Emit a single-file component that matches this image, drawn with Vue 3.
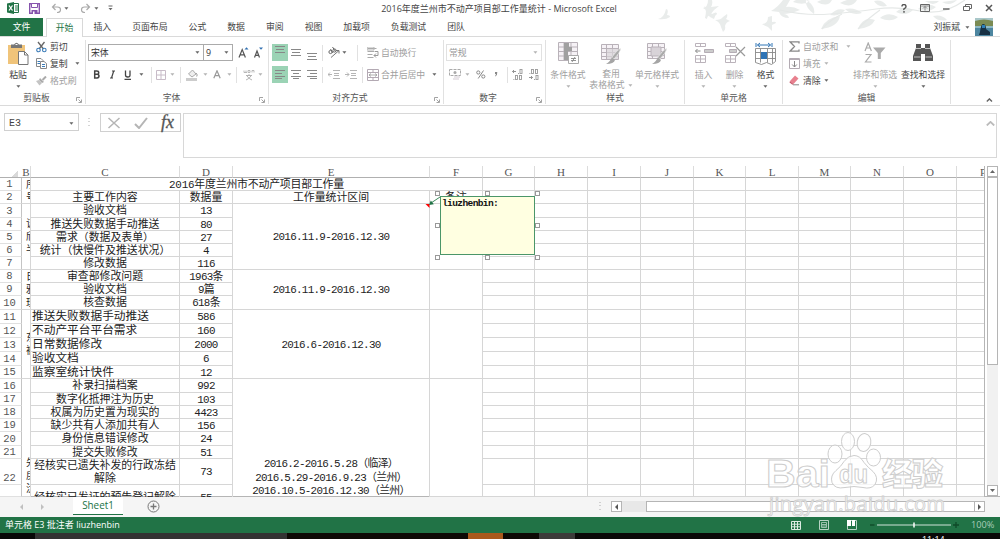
<template>
  <div class="excel">
    <!-- 標題列 + 頁籤 -->
    <header class="top">
      <svg class="leaves" width="350" height="36" viewBox="650 0 350 36">
        <g fill="#e9eceb">
          <path d="M658 19q6-1 8-10q3 0 1 6q3 0 3 2q-4 3-12 2zM703 8q5-1 5-8h4q1 4-1 7l8-1q-6 4-9 9q-3 1-3 4l-2-1q1-5 1-8zM704 6l8 8q5-3 5 0q-2 1-3 5q-5-2-7-5zM715 20q6 0 8-3l4-3q1 2-1 5l4 2q-4 1-5 5q1 4-2 6l-2-5q-1-5-6-7zM762 24q6 0 6-7l4-1v6q4-1 4 1l-4 2v6l-4-4q-3-1-6-3z" />
          <path d="M771 11q7-4 12-11h7l-4 7q7-1 14 3q-10 4-17 4q5 0 6 4q-8 0-10-6zM793 2q5-5 17-1q-6 5-17 1zM817 2q7-4 15-2q-4 8-15 2zM806 0q-1 8 8 14q2-8-8-14zM840 3q8-5 17-3q-5 9-17 3zM845 9q10-2 17 4q-10 3-17-4zM821 29q4-11 19-13q-2 11-19 13zM830 15q7-8 15-5q-5 7-15 5zM858 29q5-13 17-9q-4 8-17 9zM880 18q8-7 18-1q-7 6-18 1zM874 1q8-2 13 5q-9 2-13-5zM896 12q8-7 17-2q-7 7-17 2zM918 9q9-8 18-2q-8 7-18 2zM925 1q9 6 14 0zM942 2q8 5 15-2zM933 16q9-2 14 4q-9 2-14-4z" />
        </g>
        <path d="M780 10q25 6 50 4t46-5t44 2t45-11M842 14q-12 6-20 15M880 10q-14 10-22 19" fill="none" stroke="#e5e8e7" stroke-width="1.2" />
      </svg>
      <div class="title-row">
        <div class="quick"><Slots :items="quick" /></div>
        <div class="title">2016年度兰州市不动产项目部工作量统计 - Microsoft Excel</div>
        <div class="win"><Slots :items="winButtons" /></div>
      </div>
      <nav class="tabs">
        <span class="file">文件</span>
        <span
          v-for="tab in tabs"
          :key="tab"
          class="tab"
          :class="{ active: tab === activeTab }"
          @click="activeTab = tab">{{ tab }}</span>
        <span class="user">刘振斌</span>
        <Icon name="caret" />
        <Icon class="avatar" name="avatar" />
      </nav>
    </header>

    <!-- 功能區 -->
    <section class="ribbon">
      <div class="group g-clip">
        <div class="body">
          <div class="big paste"><Icon name="paste" /><span>粘贴</span><Icon name="caret" /></div>
          <div class="stack">
            <div class="line"><Icon name="cut" /><span>剪切</span></div>
            <div class="line"><Icon name="copy" /><span>复制</span><Icon class="far" name="caret" /></div>
            <div class="line off"><Icon name="brush" /><span>格式刷</span></div>
          </div>
        </div>
        <div class="label">剪贴板<Icon class="launch" name="launch" /></div>
      </div>

      <div class="group g-font">
        <div class="body rows">
          <div class="row">
            <div class="combo font-name">宋体<Icon name="caret" /></div>
            <div class="combo font-size">9<Icon name="caret" /></div>
            <Slots :items="fontSizeButtons" />
          </div>
          <div class="row"><Slots :items="fontButtons" /></div>
        </div>
        <div class="label">字体<Icon class="launch" name="launch" /></div>
      </div>

      <div class="group g-align">
        <div class="body rows">
          <div class="row off"><Slots :items="alignTop" /><span>自动换行</span></div>
          <div class="row off"><Slots :items="alignBottom" /><span>合并后居中</span><Icon class="far" name="caret" /></div>
        </div>
        <div class="label">对齐方式<Icon class="launch" name="launch" /></div>
      </div>

      <div class="group g-num">
        <div class="body rows">
          <div class="row"><div class="combo num-format">常规<Icon name="caretOff" /></div></div>
          <div class="row"><Slots :items="numberButtons" /></div>
        </div>
        <div class="label">数字<Icon class="launch" name="launch" /></div>
      </div>

      <div class="group g-style off">
        <div class="body">
          <div class="big"><Icon name="condFormat" /><span>条件格式</span><Icon name="caretOff" /></div>
          <div class="big"><Icon name="tableFormat" /><span>套用</span><span class="second">表格格式<Icon name="caretOff" /></span></div>
          <div class="big"><Icon name="cellStyle" /><span>单元格样式</span><Icon name="caretOff" /></div>
        </div>
        <div class="label">样式</div>
      </div>

      <div class="group g-cell">
        <div class="body">
          <div class="big off"><Icon name="insert" /><span>插入</span><Icon name="caretOff" /></div>
          <div class="big off"><Icon name="remove" /><span>删除</span><Icon name="caretOff" /></div>
          <div class="big"><Icon name="format" /><span>格式</span><Icon name="caret" /></div>
        </div>
        <div class="label">单元格</div>
      </div>

      <div class="group g-edit">
        <div class="body">
          <div class="stack">
            <div class="line off"><Icon name="sum" /><span>自动求和</span><Icon class="far" name="caretOff" /></div>
            <div class="line off"><Icon name="fillDown" /><span>填充</span><Icon class="near" name="caretOff" /></div>
            <div class="line"><Icon name="eraser" /><span>清除</span><Icon class="near" name="caret" /></div>
          </div>
          <div class="big off"><Icon name="sort" /><span>排序和筛选</span><Icon name="caretOff" /></div>
          <div class="big"><Icon name="find" /><span>查找和选择</span><Icon name="caret" /></div>
        </div>
        <div class="label">编辑</div>
      </div>
      <Icon class="collapse" name="up" />
    </section>

    <!-- 編輯列 -->
    <section class="formula">
      <div class="name-box">E3<Icon name="caret" /></div>
      <Icon class="grip" name="grip" />
      <div class="fx"><Icon name="cancel" /><Icon name="enter" /><i>fx</i></div>
      <div class="input"><Icon name="upOff" /></div>
    </section>

    <!-- 工作表 -->
    <section class="sheet-area">
      <div class="sheet" :style="{ gridTemplateColumns: colTemplate, gridTemplateRows: rowTemplate }">
        <div class="corner"></div>
        <div v-for="c in colNames" :key="c" class="col-head">{{ c }}</div>
        <div
          v-for="(h, i) in rowHeights"
          :key="'r' + i"
          class="row-head"
          :style="{ gridRow: i + 2 }">{{ i < 22 ? i + 1 : '' }}</div>
        <div
          v-for="cell in cells"
          :key="cell.r + '-' + cell.c"
          class="cell"
          :class="cell.cls"
          :style="{ gridRow: `${cell.r + 1} / span ${cell.rs || 1}`, gridColumn: `${cell.c} / span ${cell.cs || 1}` }">{{ cell.t }}</div>
      </div>
      <div class="vscroll">
        <div class="sbtn"><Icon name="arrUp" /></div>
        <div class="vthumb"></div>
        <div class="vrest"></div>
        <div class="sbtn"><Icon name="arrDown" /></div>
      </div>
      <!-- 批註 -->
      <svg class="pointer" width="20" height="12" viewBox="424 196 20 12">
        <path d="M425.5 204h4v4z" fill="#f00" />
        <path d="M440 197l-9 6" stroke="#3c8b5c" />
        <path d="M429 205l1.800-4.500 3 3.800z" fill="#217346" />
      </svg>
      <div class="note"><b>liuzhenbin:</b></div>
      <svg class="handles" width="106" height="70">
        <rect v-for="(p, i) in handles" :key="i" :x="p[0]" :y="p[1]" width="4" height="4" fill="#fff" stroke="#999" />
      </svg>
    </section>

    <section class="sheet-tabs">
      <Icon class="prev" name="arrLeftOff" />
      <Icon class="next" name="arrRightOff" />
      <div class="sheet-tab">Sheet1</div>
      <Icon class="add" name="add" />
      <Icon class="hgrip" name="grip" />
      <div class="sbtn"><Icon name="arrLeft" /></div>
      <div class="hrest"></div>
      <div class="hthumb"></div>
      <div class="sbtn"><Icon name="arrRight" /></div>
    </section>

    <footer class="status">
      <span class="info">单元格 E3 批注者 liuzhenbin</span>
      <Slots :items="viewButtons" />
      <span class="zoom">100%</span>
    </footer>

    <div class="taskbar">
      <i class="t1"></i><i class="t2"></i><i class="t3"></i><i class="t4"></i><i class="t5"></i><i class="t6"></i>
      <span class="clock">11:14</span>
    </div>

    <svg class="mark" width="190" height="95" viewBox="760 428 190 95">
      <g fill="#fff" fill-opacity=".75" stroke="#cdcdcd" stroke-width="1">
        <text class="arial" x="766" y="487" font-size="39" font-weight="700" textLength="64" lengthAdjust="spacingAndGlyphs">Bai</text>
        <ellipse cx="835" cy="454" rx="7" ry="9" />
        <ellipse cx="848" cy="441.500" rx="6.500" ry="9" />
        <ellipse cx="864" cy="442.500" rx="6.800" ry="9" transform="rotate(10 864 442.500)" />
        <ellipse cx="873.500" cy="457.500" rx="7" ry="8.500" />
        <path d="M854 455.500q6 0 10 7q4 5 9 9q6 6 2 13q-4 5-12 3q-9-2-18 0q-10 2-13-5q-2-7 4-12q5-4 8-9q4-6 10-6z" />
        <text class="arial" x="839" y="483" font-size="25" font-weight="700" textLength="29" lengthAdjust="spacingAndGlyphs">du</text>
        <text x="882" y="485" font-size="31" font-weight="900" textLength="61">经验</text>
        <text x="769" y="511" font-size="20" textLength="176" stroke-width=".8">jingyan.baidu.com</text>
      </g>
    </svg>
  </div>
</template>

<script setup>
import { ref, h } from 'vue';

const tabs = ['开始', '插入', '页面布局', '公式', '数据', '审阅', '视图', '加载项', '负载测试', '团队'];
const activeTab = ref('开始');

const svg = (w, ht, body) => ({ w, h: ht, body });
const lines = (rows) => rows.map((r) => `<path d="M${r[0]} ${r[1]}.5h${r[2]}" stroke="#888"/>`).join('');
const bigGrid = '<path d="M1.500 1.500h17v15h-17zM1.500 5.500h17M1.500 9.500h17M1.500 13.500h17M6.500 1.500v15M12.500 1.500v15" fill="#f6f2f6" stroke="#b9b2b9"/>';
const bigBrush = '<path d="M21 6q-1 5-7 11l-2-2q5-7 9-9z" fill="#aaa" stroke="#fff" stroke-width=".5"/><path d="M12 15l3 3q-1 4-9 4q4-2 6-7z" fill="#a5a5a5"/>';

// 圖示
const icons = {
  excel: svg(12, 12, '<path d="M0 1.500L7 0v12L0 10.500z" fill="#217346"/><path d="M7 1.500h4.500v9H7" fill="#fff" stroke="#217346"/><path d="M8 4h3M8 6h3M8 8h3" stroke="#217346"/><path d="M2 3.500l3.500 5M5.500 3.500L2 8.500" stroke="#fff" stroke-width="1.300"/>'),
  save: svg(11, 11, '<path d="M.7.7h9.600v9.600H.7z" fill="#fff" stroke="#8653ad" stroke-width="1.400"/><path d="M2.500.500h6v4h-6z" fill="#fff" stroke="#8653ad"/><path d="M2.500 7h6v4h-6z" fill="#8653ad"/><path d="M4 8.500h1.500V11H4z" fill="#fff"/>'),
  undo: svg(11, 10, '<path d="M4.500 1L1.500 4l3 3M1.500 4h5q3 0 3 2.700T6 9.500" fill="none" stroke="#aaa" stroke-width="1.200"/>'),
  redo: svg(11, 10, '<path d="M6.500 1l3 3-3 3M9.500 4h-5q-3 0-3 2.700T5 9.500" fill="none" stroke="#aaa" stroke-width="1.200"/>'),
  custom: svg(5, 6, '<path d="M.5 1h4" stroke="#666"/><path d="M.5 3h4l-2 2.200z" fill="#666"/>'),
  caret: svg(5, 3, '<path d="M.4.300h4L2.400 2.800z" fill="#666"/>'),
  caretOff: svg(5, 3, '<path d="M.4.300h4L2.400 2.800z" fill="#b4b4b4"/>'),
  help: svg(6, 9, '<path d="M1 2.500q0-2 2-2t2 2q0 1.200-1.300 1.800T3 6M3 7v1.700" fill="none" stroke="#555" stroke-width="1.400"/>'),
  display: svg(10, 8, '<path d="M.5.500h9v7h-9z" fill="none" stroke="#666"/><path d="M5 6.500v-4M3 4.500l2-2 2 2M1 2h8" fill="none" stroke="#777" stroke-width=".8"/>'),
  min: svg(7, 3, '<path d="M0 2h6.500" stroke="#555" stroke-width="1.300"/>'),
  restore: svg(9, 8, '<path d="M.5 2.500h6v4h-6zM2.500 2V.500h6v4H7" fill="none" stroke="#666"/>'),
  close: svg(8, 8, '<path d="M1 1l6 6M7 1L1 7" stroke="#555" stroke-width="1.500"/>'),
  avatar: svg(18, 18, '<path d="M0 0h18v18H0z" fill="#4d86a0"/><path d="M0 0h18v3H0z" fill="#a9c7c9"/><path d="M0 3q9-3 18 0v5H0z" fill="#7b8b53"/><path d="M0 8h18v2H0z" fill="#8fb9c4"/><path d="M5 14q1-8 3-8 3 0 3 5l4 3v3H4z" fill="#173043"/><path d="M7 7h3v3H7z" fill="#2d80b8"/>'),
  paste: svg(22, 23, '<path d="M1 3h17v19H1z" fill="#f0c47a"/><path d="M4 2.500h3Q9.500-1 12 2.500h3V6H4z" fill="#777"/><path d="M8.500 2.500h2" stroke="#fff"/><path d="M11.500 9.500h6l3.500 3.500v9.500h-9.500z" fill="#fff" stroke="#777"/><path d="M17.500 9.500V13H21" fill="none" stroke="#777"/>'),
  cut: svg(11, 12, '<path d="M2 1l5.500 7M8.500 1L3 8" stroke="#666" stroke-width="1.300"/><circle cx="2.500" cy="9" r="1.800" fill="none" stroke="#3b7cb8" stroke-width="1.100"/><circle cx="8.300" cy="9" r="1.800" fill="none" stroke="#3b7cb8" stroke-width="1.100"/>'),
  copy: svg(11, 11, '<path d="M.5.500h4.500l2 2v6H.500z" fill="#fff" stroke="#888"/><path d="M1.500 3.500h3M1.500 5.500h3" stroke="#3b7cb8"/><path d="M4.500 3.500H8l2.500 2v5h-6z" fill="#fff" stroke="#888"/><path d="M6 6.500h3M6 8.500h3" stroke="#3b7cb8"/>'),
  brush: svg(11, 10, '<path d="M10 .500L6.500 4" stroke="#aaa" stroke-width="2"/><path d="M4 2l4 4-2 1-3-3z" fill="#aaa"/><path d="M3 4l3 3-2.500 2.500L0 5z" fill="#c4c4c4"/>'),
  launch: svg(6, 6, '<path d="M.5 4V.500H4M2.500 2.500l2.500 2.500M5.500 2.500v3h-3" fill="none" stroke="#999" stroke-width=".9"/>'),
  growA: svg(11, 12, '<path d="M1 10.500L4.200 2.500 7.400 10.500M2.300 7.800h4" fill="none" stroke="#555" stroke-width="1.200"/><path d="M6.500 2.500h4L8.500.300z" fill="#2f6fb0"/>'),
  shrinkA: svg(11, 12, '<path d="M1.500 10.500L4 4 6.500 10.500M2.600 8.300h3" fill="none" stroke="#555" stroke-width="1.200"/><path d="M6 .500h4L8 2.800z" fill="#2f6fb0"/>'),
  bold: svg(7, 9, '<path d="M1.700 1h2q2 0 2 1.700T3.700 4.300h-2zM1.700 4.300H4q2 0 2 1.800T4 8H1.700z" fill="none" stroke="#444" stroke-width="1.500"/>'),
  italic: svg(7, 9, '<path d="M3 1h3M1 8h3M4.700 1L2.500 8" fill="none" stroke="#444" stroke-width="1.200"/>'),
  underline: svg(8, 10, '<path d="M1.500.500V5q0 2 2.300 2T6 5V.500M.500 9.300h6.500" fill="none" stroke="#444" stroke-width="1.300"/>'),
  sep: svg(1, 16, '<path d="M.5 0v16" stroke="#e1e1e1"/>'),
  border: svg(10, 10, '<path d="M.5.500h9v9h-9zM5 .500v9M.500 5h9" fill="none" stroke="#c8bcc8"/>'),
  fill: svg(12, 12, '<path d="M2.500 5l4-4 3.500 4-4 3z" fill="#eee" stroke="#aaa"/><path d="M10 4q2 2 .7 3.500" stroke="#999" fill="none"/><path d="M0 9h11v3H0z" fill="#ccc"/>'),
  colorA: svg(8, 9, '<path d="M.8 8.300L4 .800 7.200 8.300M2 5.600h4" fill="none" stroke="#999" stroke-width="1.200"/>'),
  wen: svg(12, 12, '<path d="M1 1.500v2h2v-2M3 3.500h1M5 3.500V1.500h2v2zM9 3.500v-2h2v2" fill="none" stroke="#aaa" stroke-width=".8"/><path d="M3 6.500h6M6 5.200v1.300M4 7q2 3 5 4M8 7q-2 3-5 4" fill="none" stroke="#aaa" stroke-width=".9"/>'),
  aTop: svg(16, 17, '<path d="M0 0h16v17H0z" fill="#9bd3b5"/>' + lines([[3, 2, 10], [4, 5, 8], [3, 8, 10]])),
  aMid: svg(10, 8, lines([[0, 0, 10], [1, 3, 8], [0, 6, 10]])),
  aBottom: svg(10, 15, lines([[0, 8, 10], [1, 11, 8], [0, 14, 10]])),
  aLeft: svg(16, 17, '<path d="M0 0h16v17H0z" fill="#9bd3b5"/>' + lines([[3, 4, 10], [3, 7, 7], [3, 10, 10], [3, 12, 7]])),
  aCenter: svg(10, 10, lines([[0, 0, 10], [2, 3, 6], [0, 6, 10], [2, 8, 6]])),
  aRight: svg(10, 10, lines([[0, 0, 10], [3, 3, 7], [0, 6, 10], [3, 8, 7]])),
  orient: svg(12, 11, '<path d="M3 10.500L11 3.500M8 3.500h3v3" fill="none" stroke="#777"/><circle cx="2.500" cy="5" r="1.600" fill="none" stroke="#666"/><circle cx="6.500" cy="3.500" r="1.600" fill="none" stroke="#666"/><path d="M2.500 2l2.500 4M4.500 0l3 4.500" stroke="#666"/>'),
  outdent: svg(12, 9, '<path d="M5 .500h7M6 3.500h5M6 5.500h5M5 8.500h7M0 4.500h4M2 2.500l-2 2 2 2" fill="none" stroke="#b5b5b5"/>'),
  indent: svg(12, 9, '<path d="M5 .500h7M6 3.500h5M6 5.500h5M5 8.500h7M0 4.500h4M2 2.500l2 2-2 2" fill="none" stroke="#b5b5b5"/>'),
  wrap: svg(12, 12, '<path d="M.5 1.500h9M.500 4.500h7M.500 7.500h5M.500 10.500h6" stroke="#aaa"/><path d="M0 0h7v3H0z" fill="none" stroke="#b5b5b5"/><path d="M8 4.500h3v4H7M9 6.500l-2 2 2 2" fill="none" stroke="#999"/>'),
  merge: svg(12, 12, '<path d="M.5.500h11v11H.500zM.500 3.500h11M.500 8.500h11M6 .500v3M6 8.500v3" fill="none" stroke="#b3a9b3"/><path d="M2 6h8M4 4.500L2 6l2 1.500M8 4.500L10 6 8 7.500" fill="none" stroke="#999" stroke-width=".8"/>'),
  money: svg(13, 12, '<path d="M.5.500h11v6H.500z" fill="none" stroke="#aaa" stroke-dasharray="3 1"/><circle cx="6" cy="3.500" r="1.500" fill="#aaa"/><path d="M5 7.500h6v1H5zM4 9.500h6v1H4z" fill="#d4cbd4"/>'),
  percent: svg(10, 9, '<circle cx="2.300" cy="2.500" r="1.600" fill="none" stroke="#888"/><circle cx="7.300" cy="6.500" r="1.600" fill="none" stroke="#888"/><path d="M7.500.500L2.200 8.500" stroke="#888"/>'),
  comma: svg(4, 7, '<path d="M1 1h2.300q.3 3-2 4.500l-.300-.500q1-.800.900-2H1z" fill="#888"/>'),
  decInc: svg(11, 11, '<path d="M4 2.500H.500M2 1L.500 2.500 2 4" fill="none" stroke="#888" stroke-width=".9"/><rect x="8" y=".500" width="2" height="4" fill="none" stroke="#999" stroke-width=".9"/><path d="M6 4.500h.8M1.500 10.500h.8" stroke="#888"/><rect x="3.500" y="6.500" width="2" height="4" fill="none" stroke="#999" stroke-width=".9"/><rect x="7.500" y="6.500" width="2" height="4" fill="none" stroke="#999" stroke-width=".9"/>'),
  decDec: svg(11, 11, '<path d="M1 8.500h3.500M3 7l1.500 1.500L3 10" fill="none" stroke="#888" stroke-width=".9"/><rect x="8" y="6.500" width="2" height="4" fill="none" stroke="#999" stroke-width=".9"/><path d="M1.500 4.500h.8M6 10.500h.8" stroke="#888"/><rect x="3.500" y=".500" width="2" height="4" fill="none" stroke="#999" stroke-width=".9"/><rect x="7.500" y=".500" width="2" height="4" fill="none" stroke="#999" stroke-width=".9"/>'),
  condFormat: svg(22, 23, '<path d="M1.500.500h19v18h-19zM1.500 5h19M1.500 9.500h19M1.500 14h19M7 .500v18M14 .500v18" fill="#f6f2f6" stroke="#b9b2b9"/><path d="M7 1h5v4H7zM7 5h8v4H7zM7 9h4v9H7z" fill="#a0a0a0"/><path d="M11.500 13.500h10v8h-10z" fill="#fff" stroke="#aaa"/><path d="M14 16.500h5M14 18.500h5M18 15l-3 5" stroke="#888" stroke-width=".9"/>'),
  tableFormat: svg(22, 23, '<g transform="translate(0 1)">' + bigGrid + '<path d="M7 6h11v10H7z" fill="#d9d4d9" opacity=".7"/></g>' + bigBrush),
  cellStyle: svg(22, 23, bigGrid + '<path d="M5 5h10v9H5z" fill="#d8d3d8" stroke="#b9b2b9"/>' + bigBrush),
  insert: svg(20, 22, '<path d="M1.500 1.500h10v3h-10zM6.500 1.500v3M1.500 13.500h10v7h-10zM6.500 13.500v7M1.500 17h10" fill="none" stroke="#bbb3bb"/><path d="M10.500 7.500h9v3h-9z" fill="#ccc" stroke="#b5adb5"/><path d="M1.500 9h5M3.500 7l-2 2 2 2" fill="none" stroke="#888"/>'),
  remove: svg(22, 22, '<path d="M1.500 1.500h10v3h-10zM6.500 1.500v3M1.500 13.500h10v7h-10zM6.500 13.500v7M1.500 17h10" fill="none" stroke="#bbb3bb"/><path d="M5.500 7.500h7v3h-7z" fill="#ccc" stroke="#b5adb5"/><path d="M12 5l9 9M21 5l-9 9" stroke="#999" stroke-width="1.200"/>'),
  format: svg(22, 24, '<path d="M1 1v4M17 1v4M2.500 3h13M5 1L2.500 3 5 5M13 1l2.500 2L13 5" fill="none" stroke="#2f74b5"/><path d="M.5 6.500h20v13l-4 3-5-2-5 2-6-2zM.5 10.500h20M.5 16.500h20M5.500 6.500v14M12.500 6.500v14M17.500 6.500v15" fill="#fff" stroke="#888" stroke-width=".9"/><path d="M6 10h6v7H6z" fill="#2f74b5"/>'),
  sum: svg(11, 11, '<path d="M10 2.500V.800H1L5.500 5.500 1 10.200h9V8.500" fill="none" stroke="#888" stroke-width="1.300"/>'),
  fillDown: svg(11, 11, '<path d="M.5.500h10v10H.500z" fill="#fff" stroke="#b3abb3"/><path d="M.5 1.500h10" stroke="#b3abb3"/><path d="M5.500 3v6M3.200 6.500L5.500 9l2.300-2.500" fill="none" stroke="#888"/>'),
  eraser: svg(11, 11, '<path d="M1 6L6 .500l3.500 3L4.500 9z" fill="#e8808e"/><path d="M1 6l3.500 3-1 .7L.500 7.500z" fill="#c95568"/><path d="M4 9.800h6" stroke="#888"/>'),
  sort: svg(22, 21, '<path d="M1 9L4.200 1 7.400 9M2.200 6h4M1.500 12.500h5.500L1.500 20h6" fill="none" stroke="#aaa" stroke-width="1.200"/><path d="M9 5.500h12.500l-4.700 5.500v6h-3v-6z" fill="#aaa"/>'),
  find: svg(20, 20, '<path d="M3 2h5v4h4V2h5v4l3 8v5h-8v-7H8v7H0v-5l3-8z" fill="#555"/><path d="M3 6.500h5M12 6.500h5M1 15h6.500M12.500 15H19" stroke="#ddd" stroke-width=".8"/>'),
  up: svg(7, 4, '<path d="M.8 3.500l2.600-2.600L6 3.500" fill="none" stroke="#666" stroke-width="1.400"/>'),
  upOff: svg(9, 5, '<path d="M.8 4.500L4.500.900 8.200 4.500" fill="none" stroke="#bbb" stroke-width="1.800"/>'),
  grip: svg(2, 9, '<path d="M.5.500h1M.500 3.500h1M.500 7.500h1" stroke="#aaa"/>'),
  cancel: svg(14, 12, '<path d="M1.500 1l11 10M12.500 1l-11 10" stroke="#b5b5b5" stroke-width="1.500"/>'),
  enter: svg(14, 12, '<path d="M1 7l4 4L13 1" fill="none" stroke="#b5b5b5" stroke-width="2"/>'),
  arrUp: svg(5, 3, '<path d="M0 3h5L2.500 0z" fill="#666"/>'),
  arrDown: svg(5, 3, '<path d="M0 0h5L2.500 3z" fill="#666"/>'),
  arrLeft: svg(3, 6, '<path d="M3 0v6L0 3z" fill="#555"/>'),
  arrRight: svg(3, 6, '<path d="M0 0v6l3-3z" fill="#555"/>'),
  arrLeftOff: svg(3, 6, '<path d="M3 0v6L0 3z" fill="#c0c0c0"/>'),
  arrRightOff: svg(3, 6, '<path d="M0 0v6l3-3z" fill="#c0c0c0"/>'),
  add: svg(13, 13, '<circle cx="6.500" cy="6.500" r="5.500" fill="none" stroke="#777"/><path d="M6.500 3.500v6M3.500 6.500h6" stroke="#777" stroke-width="1.300"/>'),
  vNormal: svg(10, 9, '<path d="M.5.500h9v8h-9zM.500 3.200h9M.500 5.800h9M3.500.500v8M6.500.500v8" fill="none" stroke="#dcebe2"/>'),
  vLayout: svg(10, 10, '<path d="M.5.500h9v9h-9z" fill="none" stroke="#b7d3c4"/><path d="M2.500 2.500h5v5h-5zM3 4.500h4M3 6h4" fill="none" stroke="#b7d3c4" stroke-width=".8"/>'),
  vBreak: svg(10, 10, '<path d="M.5.500h9v9h-9z" fill="none" stroke="#b7d3c4"/><path d="M0 0h4v6H0zM5 0h3v6H5z" fill="#fff"/>'),
  minus: svg(5, 2, '<path d="M0 1h4.500" stroke="#0f4a28" stroke-width="1.300"/>'),
  plus: svg(6, 6, '<path d="M0 3h6M3 0v6" stroke="#0f4a28" stroke-width="1.300"/>'),
  slider: svg(74, 6, '<path d="M0 3h74" stroke="#cfe3d8"/><path d="M37 .500v5" stroke="#fff" stroke-width="1.500"/>')
};

const Icon = (props) => {
  const ic = icons[props.name];
  return h('svg', { width: ic.w, height: ic.h, viewBox: `0 0 ${ic.w} ${ic.h}`, innerHTML: ic.body, style: 'flex:none;display:block' });
};
Icon.props = ['name'];

// 一排按鈕，每格 [圖示, 寬度]，圖示為空字串時只留空位
const Slots = (props) => props.items.map((it) =>
  h('span', { style: `flex:none;display:flex;align-items:center;justify-content:center;width:${it[1]}px` }, it[0] ? [h(Icon, { name: it[0] })] : []));
Slots.props = ['items'];

const quick = [['excel', 26], ['save', 16], ['', 8], ['undo', 12], ['caret', 8], ['', 8], ['redo', 14], ['caret', 8], ['custom', 20]];
const winButtons = [['help', 20], ['display', 22], ['min', 20], ['restore', 22], ['close', 22]];
const fontSizeButtons = [['growA', 20], ['shrinkA', 11]];
const fontButtons = [
  ['bold', 17], ['italic', 15], ['underline', 16], ['caret', 10], ['sep', 10], ['border', 9], ['caretOff', 14], ['sep', 2],
  ['fill', 22], ['caretOff', 4], ['colorA', 20], ['caretOff', 4], ['sep', 10], ['wen', 15], ['caretOff', 8]
];
const alignTop = [['aTop', 16], ['aMid', 16], ['aBottom', 16], ['sep', 5], ['orient', 17], ['caret', 5], ['sep', 20], ['wrap', 12]];
const alignBottom = [['aLeft', 16], ['aCenter', 16], ['aRight', 16], ['sep', 5], ['outdent', 18], ['indent', 15], ['sep', 9], ['merge', 12]];
const numberButtons = [['money', 18], ['caretOff', 7], ['percent', 19], ['comma', 12], ['sep', 10], ['decInc', 11], ['decDec', 20]];
const viewButtons = [['vNormal', 28], ['vLayout', 28], ['vBreak', 28], ['minus', 13], ['slider', 70], ['plus', 13]];

// 欄寬、列高
const colNames = ['B', 'C', 'D', 'E', 'F', 'G', 'H', 'I', 'J', 'K', 'L', 'M', 'N', 'O', 'P'];
const colWidths = [22, 9, 149, 53, 197, 53, 52, 53, 53, 53, 52, 53, 52, 53, 53, 53];
const rowHeights = [13, 13, 14, 13, 13, 13, 13, 13, 13, 14, 14, 14, 14, 14, 13, 14, 13, 13, 13, 14, 13, 26, 12];
const colTemplate = colWidths.map((w) => w + 'px').join(' ');
const rowTemplate = '12px ' + rowHeights.map((v) => v + 'px').join(' ');

const rowsData = [
  ['主要工作内容', '数据量'],
  ['验收文档', '13'],
  ['推送失败数据手动推送', '80'],
  ['需求（数据及表单）', '27'],
  ['统计（快慢件及推送状况）', '4'],
  ['修改数据', '116'],
  ['审查部修改问题', '1963条'],
  ['验收文档', '9篇'],
  ['核查数据', '618条'],
  ['推送失败数据手动推送', '586'],
  ['不动产平台平台需求', '160'],
  ['日常数据修改', '2000'],
  ['验收文档', '6'],
  ['监察室统计快件', '12'],
  ['补录扫描档案', '992'],
  ['数字化抵押注为历史', '103'],
  ['权属为历史置为现实的', '4423'],
  ['缺少共有人添加共有人', '156'],
  ['身份信息错误修改', '24'],
  ['提交失败修改', '51'],
  ['经核实已遗失补发的行政冻结解除', '73'],
  ['经核实已发证的预告登记解除', '55']
];

const cells = [
  { r: 1, c: 2, rs: 2, t: '序号', cls: 'side' },
  { r: 3, c: 2, rs: 5, t: '该欣半', cls: 'side' },
  { r: 8, c: 2, rs: 3, t: '日雅理', cls: 'side' },
  { r: 11, c: 2, rs: 5, t: '东裤', cls: 'side' },
  { r: 16, c: 2, rs: 8, t: '先戻汰', cls: 'side low' },
  { r: 1, c: 3, cs: 4, t: '2016年度兰州市不动产项目部工作量', cls: 'head' },
  { r: 2, c: 5, t: '工作量统计区间' },
  { r: 2, c: 6, t: '备注' },
  { r: 3, c: 5, rs: 5, t: '2016.11.9-2016.12.30', cls: 'num' },
  { r: 8, c: 5, rs: 3, t: '2016.11.9-2016.12.30', cls: 'num' },
  { r: 11, c: 5, rs: 5, t: '2016.6-2016.12.30', cls: 'num' },
  { r: 16, c: 5, rs: 8, t: '2016.2-2016.5.28（临泽）\n2016.5.29-2016.9.23（兰州）\n2016.10.5-2016.12.30（兰州）', cls: 'num period' },
  { r: 3, c: 6, rs: 5 },
  { r: 8, c: 6, rs: 3 },
  { r: 11, c: 6, rs: 5 },
  { r: 16, c: 6, rs: 8 }
];
rowsData.forEach(([name, count], i) => {
  const r = i + 2;
  const cut = r === 23 ? ' cut' : '';
  cells.push({ r, c: 3, t: name, cls: (r >= 11 && r <= 15 ? 'left' : '') + cut });
  cells.push({ r, c: 4, t: count, cls: (r > 2 ? 'num' : '') + cut });
});
for (let r = 1; r <= 23; r++) {
  for (let c = 7; c <= 16; c++) cells.push({ r, c });
}

const handles = [[0.5, 0.5], [50.5, 0.5], [100.5, 0.5], [0.5, 32.5], [100.5, 32.5], [0.5, 64.5], [50.5, 64.5], [100.5, 64.5]];
</script>

<style>
body {
  margin: 0;
  overflow: hidden;
}
</style>

<style scoped>
.excel {
  position: relative;
  width: 1000px;
  height: 539px;
  overflow: hidden;
  background: #fff;
  color: #444;
  font-family: "Open Sans", "Noto Sans CJK SC", sans-serif;
  font-size: 8.85px;
  line-height: 12px;
  display: flex;
  flex-direction: column;
}

.top {
  position: relative;
  height: 36px;
}

.leaves {
  position: absolute;
  right: 0;
  top: 0;
}

.title-row {
  position: relative;
  display: flex;
  height: 16px;
}

.quick {
  display: flex;
  width: 300px;
}

.title {
  width: 398px;
  text-align: center;
  line-height: 17px;
  font-size: 9px;
  white-space: nowrap;
}

.win {
  display: flex;
  width: 302px;
  padding-left: 196px;
  box-sizing: border-box;
}

.tabs {
  position: relative;
  display: flex;
  align-items: center;
  height: 20px;
  padding-top: 2px;
  box-sizing: border-box;
}

.file {
  width: 43px;
  margin-right: 3px;
  background: #217346;
  color: #fff;
  text-align: center;
  line-height: 18px;
}

.tab {
  padding: 0 10.5px;
  line-height: 18px;
  cursor: pointer;
}

.tab.active {
  width: 37px;
  height: 19px;
  padding: 0;
  box-sizing: border-box;
  text-align: center;
  color: #217346;
  background: #fff;
  border: 1px solid #d8d8d8;
  border-bottom: none;
  z-index: 1;
}

.user {
  margin-left: auto;
  margin-right: 5px;
}

.avatar {
  margin: 0 7px 0 5px;
}

.ribbon {
  display: flex;
  height: 70px;
  box-sizing: border-box;
  border-top: 1px solid #dadada;
  border-bottom: 1px solid #dadada;
}

.group {
  flex: none;
  height: 64px;
  margin-top: 3px;
  box-sizing: border-box;
  border-right: 1px solid #e1e1e1;
}

.g-clip { width: 86px; }
.g-font { width: 183px; }
.g-align { width: 175px; }
.g-num { width: 102px; }
.g-style { width: 139px; }
.g-cell { width: 98px; }
.g-edit { width: 168px; }

.body {
  display: flex;
  height: 51px;
}

.label {
  display: flex;
  justify-content: center;
  line-height: 14px;
  position: relative;
}

.g-clip .label { padding-right: 12px; }
.g-font .label { padding-right: 11px; }
.g-align .label { padding-right: 12px; }
.g-num .label { padding-right: 13px; }

.launch {
  position: absolute;
  right: 3px;
  top: 6px;
}

.off {
  color: #a0a0a0;
}

.off .label, .label {
  color: #555;
}

.big {
  display: flex;
  flex-direction: column;
  align-items: center;
  white-space: nowrap;
  padding-top: 2px;
  box-sizing: border-box;
}

.big > svg:first-child {
  margin-bottom: auto;
}

.big > svg:last-child {
  margin: 4px 0 3px;
}

.big .second {
  display: flex;
  align-items: center;
  gap: 3px;
  line-height: 11px;
}

.paste {
  width: 36px;
}

.stack .line {
  display: flex;
  align-items: center;
  height: 17px;
  gap: 3px;
  white-space: nowrap;
}

.stack {
  margin-top: -2px;
}

.line .far {
  margin-left: 4px;
}

.rows {
  flex-direction: column;
}

.row {
  display: flex;
  align-items: center;
  height: 17px;
  margin-top: 4px;
  white-space: nowrap;
}

.row + .row {
  margin-top: 5px;
}

.g-font .row, .g-num .row { padding-left: 2px; }
.g-align .row { padding-left: 3px; }

.g-align .row > span:last-of-type {
  margin-left: 2px;
}

.g-align .far {
  margin-left: 7px;
}

.combo {
  display: flex;
  align-items: center;
  justify-content: space-between;
  height: 17px;
  padding: 0 3px 0 2px;
  box-sizing: border-box;
  border: 1px solid #ababab;
  color: #333;
}

.font-name { width: 116px; }

.font-size {
  width: 30px;
  margin-left: -1px;
}

.num-format {
  width: 96px;
  border-color: #e1e1e1;
  color: #999;
}

.g-style .big:nth-child(1) { width: 44px; }
.g-style .big:nth-child(2) { width: 42px; }
.g-style .big:nth-child(3) { width: 50px; }

.g-cell .body { padding-left: 3px; }
.g-cell .big { width: 31px; }

.g-edit .body { padding-left: 6px; }

.g-edit .stack {
  flex: none;
  width: 62px;
}

.g-edit .big { width: 48px; }

.g-edit .line .far {
  margin-left: 5px;
}

.collapse {
  margin: 61px 0 0 35px;
}

.formula {
  display: flex;
  height: 59px;
  padding: 7px 0 0 4px;
  box-sizing: border-box;
}

.name-box {
  display: flex;
  align-items: center;
  justify-content: space-between;
  width: 75px;
  height: 18px;
  padding: 2px 4px 0;
  box-sizing: border-box;
  border: 1px solid #d0d0d0;
  font: 10px "Liberation Mono", monospace;
}

.grip {
  margin: 5px 10px 0 9px;
}

.fx {
  display: flex;
  align-items: center;
  width: 81px;
  height: 19px;
  padding-left: 6px;
  gap: 13px;
  box-sizing: border-box;
  border: 1px solid #d0d0d0;
}

.fx i {
  font: italic 18px/17px "Liberation Serif", serif;
  color: #555;
  -webkit-text-stroke: 0.3px #555;
}

.input {
  display: flex;
  justify-content: flex-end;
  width: 814px;
  height: 45px;
  margin-left: 2px;
  padding: 7px 1px;
  box-sizing: border-box;
  border: 1px solid #d8d8d8;
}

.sheet-area {
  position: relative;
  display: flex;
  height: 332px;
  box-sizing: border-box;
  border-bottom: 1px solid #b5b5b5;
}

.sheet {
  display: grid;
  flex: none;
  width: 985px;
  height: 331px;
  margin-top: 1px;
  overflow: hidden;
  box-sizing: border-box;
  border-right: 1px solid #b5b5b5;
  color: #222;
  font-family: "Liberation Mono", "Noto Sans CJK SC", monospace;
  font-size: 10.9px;
  line-height: 13px;
}

.corner {
  border-bottom: 1px solid #b0b0b0;
  box-sizing: border-box;
  background: linear-gradient(135deg, transparent 50%, #d9d9d9 50%) 11px 4px / 7px 7px no-repeat;
}

.col-head {
  border-right: 1px solid #dcdcdc;
  border-bottom: 1px solid #b0b0b0;
  box-sizing: border-box;
  text-align: center;
  font: 11px/13px "Liberation Serif", serif;
  color: #555;
}

.row-head {
  grid-column: 1;
  display: flex;
  align-items: flex-end;
  justify-content: center;
  padding-right: 2px;
  border-right: 1px solid #c4c4c4;
  border-bottom: 1px solid #e0e0e0;
  box-sizing: border-box;
  font-size: 10.5px;
  line-height: 11px;
  color: #555;
}

.cell {
  display: flex;
  align-items: center;
  justify-content: center;
  min-width: 0;
  min-height: 0;
  padding-top: 2px;
  overflow: hidden;
  text-align: center;
  border-right: 1px solid #d6d6d6;
  border-bottom: 1px solid #d6d6d6;
  box-sizing: border-box;
}

.left {
  justify-content: flex-start;
  padding-left: 1px;
  font-size: 11.7px;
}

.head {
  letter-spacing: -0.2px;
}

.num {
  letter-spacing: -0.7px;
  white-space: pre;
}

.period {
  align-items: flex-end;
  margin-bottom: -2px;
  line-height: 13.2px;
}

.cut {
  align-items: flex-start;
  padding-top: 7px;
  border-bottom: none;
}

.side {
  justify-content: flex-start;
  padding-left: 4px;
  white-space: normal;
  word-break: break-all;
  font-size: 10px;
}

.low {
  align-items: flex-end;
}

.vscroll {
  display: flex;
  flex-direction: column;
  margin: 1px 0 0 2px;
  width: 11px;
  height: 330px;
}

.sbtn {
  display: flex;
  flex: none;
  align-items: center;
  justify-content: center;
  width: 11px;
  height: 11px;
  box-sizing: border-box;
  border: 1px solid #b5b5b5;
  background: #fff;
}

.vthumb {
  height: 188px;
  box-sizing: border-box;
  border: 1px solid #b5b5b5;
}

.vrest {
  flex: 1;
  background: #f1f1f1;
}

.pointer {
  position: absolute;
  left: 424px;
  top: 31px;
}

.note {
  position: absolute;
  left: 440px;
  top: 31px;
  width: 95px;
  height: 59px;
  padding: 0 1px;
  box-sizing: border-box;
  background: #ffffe1;
  border: 1px solid #4b9669;
  color: #111;
  font: 9.6px/13px "Liberation Mono", monospace;
  letter-spacing: -0.65px;
}

.handles {
  position: absolute;
  left: 435px;
  top: 26px;
}

.sheet-tabs {
  display: flex;
  align-items: center;
  height: 20px;
  padding-bottom: 1px;
  box-sizing: border-box;
  background: #f5f5f5;
}

.prev { margin-left: 20px; }
.next { margin: 0 30px 0 18px; }

.sheet-tab {
  width: 50px;
  height: 18px;
  margin-left: -1px;
  box-sizing: border-box;
  align-self: flex-start;
  background: #fff;
  border-bottom: 1.5px solid #217346;
  color: #217346;
  text-align: center;
  font-size: 9.9px;
  line-height: 17px;
}

.add { margin-left: 24px; }
.hgrip { margin: 0 10px 0 auto; }

.hrest {
  width: 24px;
  height: 11px;
  background: #e8e8e8;
}

.hthumb {
  width: 328px;
  height: 11px;
  box-sizing: border-box;
  background: #fff;
  border: 1px solid #b5b5b5;
  border-right: none;
}

.hthumb + .sbtn {
  margin-right: 15px;
}

.status {
  display: flex;
  align-items: center;
  height: 16px;
  padding-left: 5px;
  background: #217346;
  color: #fff;
}

.info {
  width: 777px;
  line-height: 14px;
  font-size: 9px;
}

.zoom {
  margin-left: 9px;
  color: #a9cdb9;
  font-size: 9.2px;
}

.taskbar {
  display: flex;
  height: 6px;
  overflow: hidden;
  background: #0a0908;
}

.t1 { width: 35px; background: #080808; }
.t2 { width: 252px; background: #333; }
.t3 { width: 181px; background: #0d0905; }
.t4 { width: 35px; background: #a9591c; }
.t5 { width: 36px; background: #0d0905; }
.t6 { width: 36px; background: #3c3b3a; }

.clock {
  margin-left: 347px;
  margin-top: 1px;
  color: #fff;
}

.mark {
  position: absolute;
  left: 760px;
  top: 428px;
}

.arial {
  font-family: "Liberation Sans", Arial, sans-serif;
}
</style>
